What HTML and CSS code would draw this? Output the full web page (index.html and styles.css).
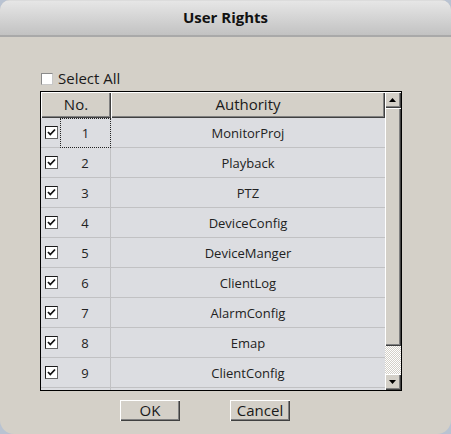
FILE: index.html
```html
<!DOCTYPE html>
<html>
<head>
<meta charset="utf-8">
<title>User Rights</title>
<link rel="stylesheet" href="styles.css">
</head>
<body>
<div class="dialog">
  <div class="titlebar">User Rights</div>
  <div class="content">
    <label class="select-all"><span class="box"></span><span class="sa-text">Select All</span></label>
    <div class="grid">
      <div class="grid-main">
        <div class="head">
          <div class="hcell hno">No.</div>
          <div class="hcell hauth">Authority</div>
        </div>
        <div class="rows">
          <div class="row"><div class="c-chk"><span class="cb"><svg viewBox="0 0 11 11"><path d="M2 5 L4.3 7.5 L9 2.5" /></svg></span></div><div class="c-num focus">1</div><div class="c-auth">MonitorProj</div></div>
          <div class="row"><div class="c-chk"><span class="cb"><svg viewBox="0 0 11 11"><path d="M2 5 L4.3 7.5 L9 2.5" /></svg></span></div><div class="c-num">2</div><div class="c-auth">Playback</div></div>
          <div class="row"><div class="c-chk"><span class="cb"><svg viewBox="0 0 11 11"><path d="M2 5 L4.3 7.5 L9 2.5" /></svg></span></div><div class="c-num">3</div><div class="c-auth">PTZ</div></div>
          <div class="row"><div class="c-chk"><span class="cb"><svg viewBox="0 0 11 11"><path d="M2 5 L4.3 7.5 L9 2.5" /></svg></span></div><div class="c-num">4</div><div class="c-auth">DeviceConfig</div></div>
          <div class="row"><div class="c-chk"><span class="cb"><svg viewBox="0 0 11 11"><path d="M2 5 L4.3 7.5 L9 2.5" /></svg></span></div><div class="c-num">5</div><div class="c-auth">DeviceManger</div></div>
          <div class="row"><div class="c-chk"><span class="cb"><svg viewBox="0 0 11 11"><path d="M2 5 L4.3 7.5 L9 2.5" /></svg></span></div><div class="c-num">6</div><div class="c-auth">ClientLog</div></div>
          <div class="row"><div class="c-chk"><span class="cb"><svg viewBox="0 0 11 11"><path d="M2 5 L4.3 7.5 L9 2.5" /></svg></span></div><div class="c-num">7</div><div class="c-auth">AlarmConfig</div></div>
          <div class="row"><div class="c-chk"><span class="cb"><svg viewBox="0 0 11 11"><path d="M2 5 L4.3 7.5 L9 2.5" /></svg></span></div><div class="c-num">8</div><div class="c-auth">Emap</div></div>
          <div class="row"><div class="c-chk"><span class="cb"><svg viewBox="0 0 11 11"><path d="M2 5 L4.3 7.5 L9 2.5" /></svg></span></div><div class="c-num">9</div><div class="c-auth">ClientConfig</div></div>
          <div class="row"><div class="c-chk"></div><div class="c-num"></div><div class="c-auth"></div></div>
        </div>
      </div>
      <div class="scrollbar">
        <div class="sbtn"><svg viewBox="0 0 7 4"><path d="M3.5 0 L7 4 L0 4 Z"/></svg></div>
        <div class="thumb"></div>
        <div class="track"></div>
        <div class="sbtn"><svg viewBox="0 0 7 4"><path d="M0 0 L7 0 L3.5 4 Z"/></svg></div>
      </div>
    </div>
    <div class="buttons">
      <button class="btn">OK</button>
      <button class="btn">Cancel</button>
    </div>
  </div>
</div>
</body>
</html>
```
FILE: styles.css
```css
* { box-sizing: border-box; }
html, body { margin: 0; padding: 0; }
body {
  background: #b9c3d2;
  width: 451px;
  height: 434px;
  overflow: hidden;
  font-family: "Open Sans", "DejaVu Sans", sans-serif;
  color: #111;
}
.dialog {
  width: 451px;
  height: 434px;
  background: #d4d0c8;
  border-radius: 10px 10px 14px 14px;
  overflow: hidden;
}
.titlebar {
  height: 37px;
  background: linear-gradient(#e6e6e6, #c2c2c2);
  border-top: 1px solid #dcdcdc;
  border-bottom: 2px solid #a9a9a9;
  text-align: center;
  font-weight: bold;
  font-size: 15px;
  line-height: 33px;
  color: #111;
}
.content {
  padding: 35px 0 0 40px;
}
.select-all {
  display: flex;
  align-items: center;
  height: 13px;
  margin-left: 1px;
}
.box {
  width: 12px;
  height: 12px;
  background: #fff;
  border: 1px solid #8a8a8a;
  border-right-color: #c8c8c8;
  border-bottom-color: #c8c8c8;
}
.sa-text {
  margin-left: 5px;
  font-size: 15px;
  line-height: 13px;
  color: #1a1a1a;
}
.grid {
  margin-top: 6px;
  display: flex;
  width: 362px;
  height: 300px;
  border: 1px solid #000;
}
.grid-main {
  width: 344px;
  overflow: hidden;
  background: #dcdde1;
}
.head {
  display: flex;
  height: 26px;
  background: #d4d0c8;
}
.hcell {
  height: 26px;
  font-size: 15px;
  line-height: 25px;
  text-align: center;
  color: #1a1a1a;
  box-shadow: inset 1px 1px #fff, inset -1px -1px #404040, inset -2px -2px #808080;
}
.hno { width: 70px; }
.hauth { width: 274px; }
.row {
  display: flex;
  height: 30px;
}
.row > div {
  height: 30px;
  border-bottom: 1px solid #c1c1c3;
  display: flex;
  align-items: center;
}
.c-chk {
  width: 19px;
  padding-left: 4px;
}
.cb {
  width: 13px;
  height: 13px;
  background: #fff;
  border: 1px solid #1c1c1c;
  border-right-color: #666;
  border-bottom-color: #666;
  display: flex;
}
.cb svg {
  width: 11px;
  height: 11px;
  fill: none;
  stroke: #111;
  stroke-width: 1.8;
}
.c-num {
  width: 51px;
  border-right: 1px solid #c1c1c3;
  justify-content: center;
  font-size: 13px;
  color: #222;
}
.c-num.focus {
  border: 1px dotted #222;
}
.c-auth {
  width: 274px;
  justify-content: center;
  font-size: 13px;
  color: #222;
}
.scrollbar {
  width: 16px;
  display: flex;
  flex-direction: column;
  background: #d4d0c8;
}
.sbtn {
  height: 16px;
  background: #d4d0c8;
  box-shadow: inset 1px 1px #fff, inset -1px -1px #404040, inset -2px -2px #808080;
  display: flex;
  align-items: center;
  justify-content: center;
}
.sbtn svg {
  width: 7px;
  height: 4px;
  fill: #000;
  margin: -1px 1px 0 0;
}
.thumb {
  height: 238px;
  background: #d4d0c8;
  box-shadow: inset 1px 1px #fff, inset -1px -1px #404040, inset -2px -2px #808080;
}
.track {
  height: 28px;
  background: repeating-conic-gradient(#ffffff 0 25%, #d4d0c8 0 50%) 0 0 / 2px 2px;
}
.buttons {
  display: flex;
  gap: 50px;
  margin-top: 9px;
  padding-left: 80px;
}
.btn {
  width: 60px;
  height: 21px;
  padding: 0;
  border: none;
  background: #d4d0c8;
  box-shadow: inset 1px 1px #fff, inset -1px -1px #404040, inset -2px -2px #808080;
  font-family: "Open Sans", "DejaVu Sans", sans-serif;
  font-size: 15px;
  line-height: 19px;
  color: #1a1a1a;
}
```
